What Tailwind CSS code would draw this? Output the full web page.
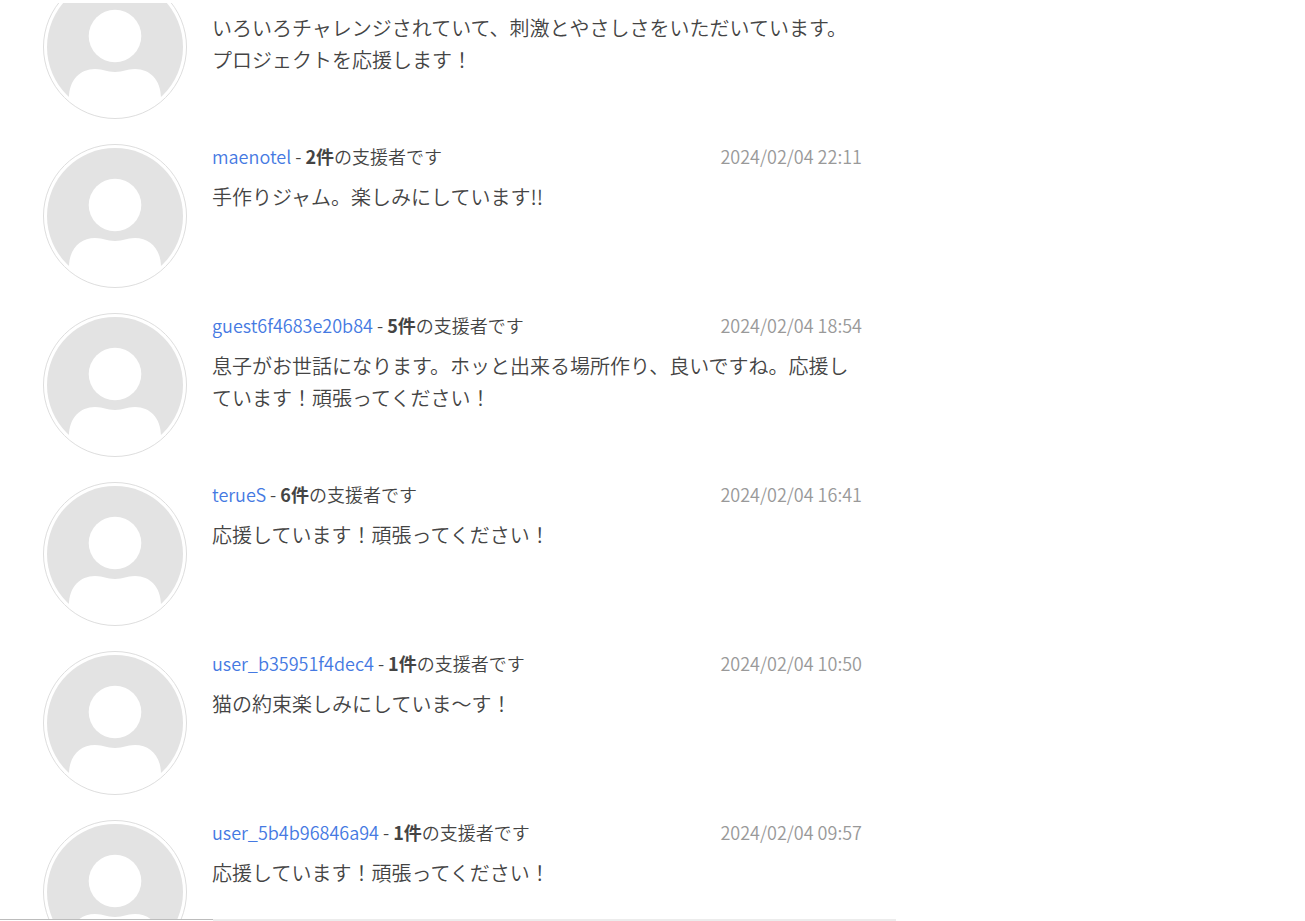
<!DOCTYPE html>
<html lang="ja">
<head>
<meta charset="utf-8">
<meta name="viewport" content="width=device-width, initial-scale=1">
<title>応援コメント</title>
<script src="https://cdn.jsdelivr.net/npm/@tailwindcss/browser@4"></script>
</head>
<body class="flex h-screen flex-col overflow-hidden bg-white pt-[3px] font-['Noto_Sans_CJK_JP',sans-serif] font-[350] text-[#444]">
<svg class="hidden" aria-hidden="true">
  <symbol id="avatar" viewBox="0 0 144 144">
    <clipPath id="disc"><circle cx="72" cy="72" r="68.5"/></clipPath>
    <circle cx="72" cy="72" r="68" fill="#e3e3e3"/>
    <circle cx="72" cy="61" r="26.3" fill="#fff"/>
    <path clip-path="url(#disc)" fill="#fff" d="M26 123C26 105 37 94 52 94C61 94 63 97 72 97C81 97 83 94 92 94C107 94 118 105 118 123V144H26Z"/>
    <circle cx="72" cy="72" r="71.5" fill="none" stroke="#dedede" stroke-width="1"/>
  </symbol>
</svg>
<main class="min-h-0 flex-1 overflow-hidden">
  <ul class="-mt-7 ml-[43px] flex max-w-[819px] flex-col gap-[25px]">
    <li class="flex gap-[25px]">
      <svg class="size-36 shrink-0"><use href="#avatar"/></svg>
      <div class="min-w-0 flex-1 pt-[37px]">
        <p class="text-xl/8">いろいろチャレンジされていて、刺激とやさしさをいただいています。<br>プロジェクトを応援します！</p>
      </div>
    </li>
    <li class="flex gap-[25px]">
      <svg class="size-36 shrink-0"><use href="#avatar"/></svg>
      <div class="min-w-0 flex-1">
        <div class="flex justify-between text-lg/6">
          <p><a href="#" class="mr-1 text-[#4579e2]">maenotel</a>- <b>2件</b>の支援者です</p>
          <time class="text-[#999]">2024/02/04 22:11</time>
        </div>
        <p class="mt-[13px] text-xl/8">手作りジャム。楽しみにしています!!</p>
      </div>
    </li>
    <li class="flex gap-[25px]">
      <svg class="size-36 shrink-0"><use href="#avatar"/></svg>
      <div class="min-w-0 flex-1">
        <div class="flex justify-between text-lg/6">
          <p><a href="#" class="mr-1 text-[#4579e2]">guest6f4683e20b84</a>- <b>5件</b>の支援者です</p>
          <time class="text-[#999]">2024/02/04 18:54</time>
        </div>
        <p class="mt-[13px] text-xl/8">息子がお世話になります。ホッと出来る場所作り、良いですね。応援しています！頑張ってください！</p>
      </div>
    </li>
    <li class="flex gap-[25px]">
      <svg class="size-36 shrink-0"><use href="#avatar"/></svg>
      <div class="min-w-0 flex-1">
        <div class="flex justify-between text-lg/6">
          <p><a href="#" class="mr-1 text-[#4579e2]">terueS</a>- <b>6件</b>の支援者です</p>
          <time class="text-[#999]">2024/02/04 16:41</time>
        </div>
        <p class="mt-[13px] text-xl/8">応援しています！頑張ってください！</p>
      </div>
    </li>
    <li class="flex gap-[25px]">
      <svg class="size-36 shrink-0"><use href="#avatar"/></svg>
      <div class="min-w-0 flex-1">
        <div class="flex justify-between text-lg/6">
          <p><a href="#" class="mr-1 text-[#4579e2]">user_b35951f4dec4</a>- <b>1件</b>の支援者です</p>
          <time class="text-[#999]">2024/02/04 10:50</time>
        </div>
        <p class="mt-[13px] text-xl/8">猫の約束楽しみにしていま〜す！</p>
      </div>
    </li>
    <li class="flex gap-[25px]">
      <svg class="size-36 shrink-0"><use href="#avatar"/></svg>
      <div class="min-w-0 flex-1">
        <div class="flex justify-between text-lg/6">
          <p><a href="#" class="mr-1 text-[#4579e2]">user_5b4b96846a94</a>- <b>1件</b>の支援者です</p>
          <time class="text-[#999]">2024/02/04 09:57</time>
        </div>
        <p class="mt-[13px] text-xl/8">応援しています！頑張ってください！</p>
      </div>
    </li>
  </ul>
</main>
<footer class="flex h-0.5 max-w-[896px] shrink-0">
  <div class="h-px w-[213px] bg-[#bcbcbc]"></div>
  <div class="flex-1 bg-[#ececec]"></div>
</footer>
</body>
</html>
